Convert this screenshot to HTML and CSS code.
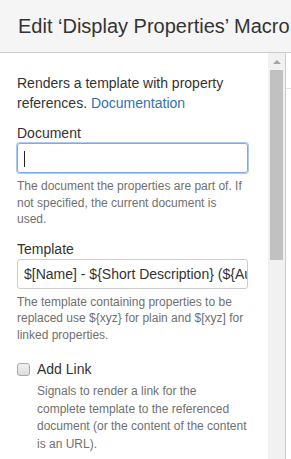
FILE: index.html
```html
<!DOCTYPE html>
<html lang="en">
<head>
    <meta charset="UTF-8">
    <title>Edit 'Display Properties' Macro</title>
    <link rel="stylesheet" href="styles.css">
</head>
<body>
    <header class="dialog-header">
        <h1>Edit &lsquo;Display Properties&rsquo; Macro</h1>
    </header>

    <div class="dialog-body">
        <div class="macro-form">
            <p class="intro">Renders a template with property references. <a href="#">Documentation</a></p>

            <div class="field">
                <label>Document</label>
                <div class="text-input focused"><span class="caret"></span></div>
                <p class="description">The document the properties are part of. If not specified, the current document is used.</p>
            </div>

            <div class="field">
                <label>Template</label>
                <div class="text-input">$[Name] - ${Short Description} (${Author})</div>
                <p class="description">The template containing properties to be replaced use ${xyz} for plain and $[xyz] for linked properties.</p>
            </div>

            <div class="field checkbox-field">
                <div class="checkbox-row">
                    <span class="checkbox"></span>
                    <label>Add Link</label>
                </div>
                <p class="description">Signals to render a link for the complete template to the referenced document (or the content of the content is an URL).</p>
            </div>
        </div>

        <div class="scrollbar">
            <div class="scroll-arrow"></div>
            <div class="scroll-thumb"></div>
        </div>

        <div class="side-panel">
            <div class="side-top"></div>
        </div>
    </div>
</body>
</html>
```

FILE: styles.css
```css
/* Basic Reset */
* {
    margin: 0;
    padding: 0;
    box-sizing: border-box;
}

html, body {
    height: 100%;
    overflow: hidden;
}

body {
    font-family: "Liberation Sans", Arial, sans-serif;
    font-size: 14px;
    color: #333;
    background-color: #fff;
    display: flex;
    flex-direction: column;
}

.dialog-header {
    background-color: #f5f5f5;
    border-bottom: 1px solid #ccc;
    height: 53px;
    padding: 14px 0 0 18px;
    white-space: nowrap;
    overflow: hidden;
}

.dialog-header h1 {
    font-size: 20px;
    font-weight: normal;
    line-height: 24px;
}

.dialog-body {
    flex: 1;
    display: flex;
    min-height: 0;
}

.macro-form {
    flex: 1;
    padding: 20px 20px 0 17px;
    overflow: hidden;
}

.intro {
    line-height: 20px;
    margin-bottom: 10px;
}

.intro a {
    color: #3572b0;
    text-decoration: none;
}

.field {
    margin-bottom: 11px;
}

.field label {
    display: block;
    line-height: 20px;
}

.text-input {
    height: 30px;
    border: 1px solid #ccc;
    border-radius: 3px;
    padding: 0 5px 0 6px;
    line-height: 28px;
    white-space: nowrap;
    overflow: hidden;
}

.text-input.focused {
    border-color: #7fa9ec;
    box-shadow: 0 0 0 1px #a9c8f5;
}

.caret {
    display: inline-block;
    width: 1px;
    height: 16px;
    background-color: #222;
    vertical-align: middle;
}

.description {
    font-size: 12px;
    line-height: 16.5px;
    color: #707070;
    margin-top: 5px;
}

.checkbox-field {
    margin-top: 16px;
}

.checkbox-row {
    display: flex;
    align-items: center;
    gap: 7px;
}

.checkbox {
    width: 13px;
    height: 13px;
    border: 1px solid #a9a9a9;
    border-radius: 3px;
    background: linear-gradient(#f2f2f2, #dcdcdc);
}

.checkbox-field .description {
    padding-left: 20px;
    line-height: 17.5px;
    margin-top: 4px;
}

.scrollbar {
    width: 17px;
    background-color: #f1f1f1;
    padding: 0 2px;
}

.scroll-arrow {
    width: 0;
    height: 0;
    margin: 7px auto 6px;
    border-left: 4px solid transparent;
    border-right: 4px solid transparent;
    border-bottom: 4px solid #a3a3a3;
}

.scroll-thumb {
    height: 190px;
    background-color: #c1c1c1;
}

.side-panel {
    width: 6px;
    border-left: 1px solid #ccc;
}

.side-top {
    height: 36px;
    border-bottom: 1px solid #ddd;
}
```
